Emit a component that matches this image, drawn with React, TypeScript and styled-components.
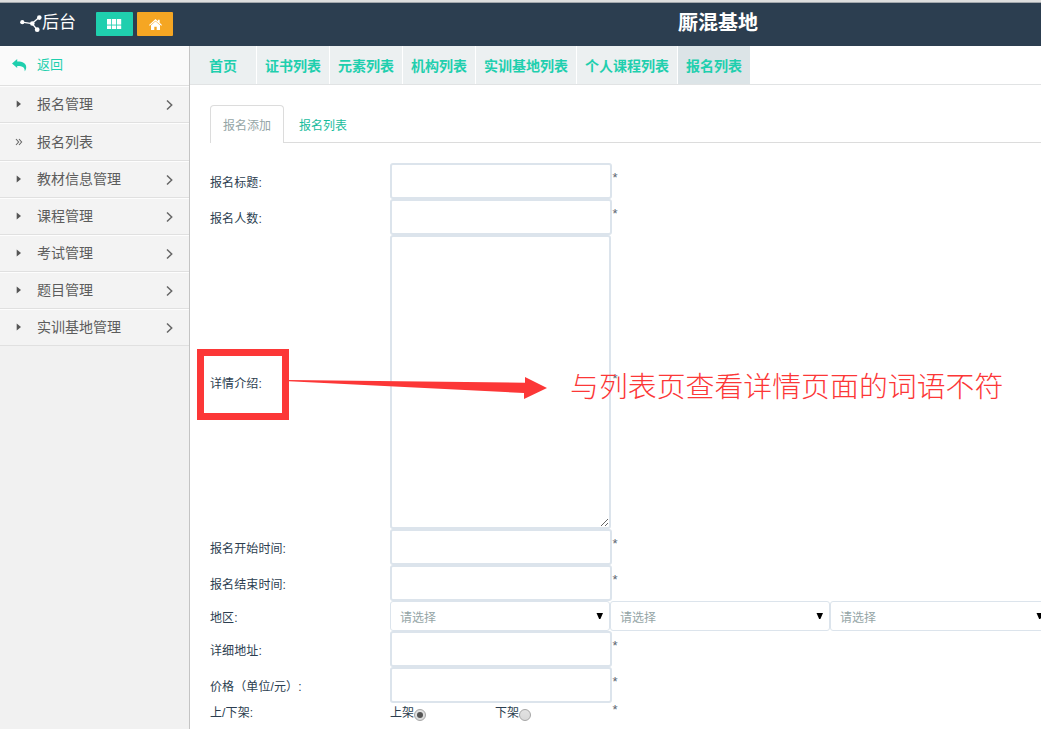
import React from 'react';
import styled, { createGlobalStyle, css } from 'styled-components';

const Global = createGlobalStyle`
  *, *::before, *::after { box-sizing: border-box; }
  html, body { margin: 0; padding: 0; overflow: hidden; background: #fff; }
  body {
    font-family: "Liberation Sans", "Noto Sans CJK SC", sans-serif;
    font-size: 12px;
    color: #2c3e50;
  }
`;

const Page = styled.div`
  position: relative;
  width: 1041px;
  height: 729px;
  overflow: hidden;
  display: flex;
  flex-direction: column;
`;

const Header = styled.header`
  flex: none;
  display: flex;
  align-items: center;
  height: 46px;
  padding: 0 0 2px 20px;
  border-top: 2px solid #dedede;
  background: #2c3e50;
  box-shadow: inset 0 1px 0 #a3a8ad;
`;

const Brand = styled.div`
  display: flex;
  align-items: center;
  width: 76px;
  color: #fff;
  font-size: 17px;
  line-height: 38px;
  white-space: nowrap;
  svg { margin-top: 1px; }
`;

const HeaderButton = styled.button<{ $color: string; $width: number }>`
  display: flex;
  align-items: center;
  justify-content: center;
  width: ${p => p.$width}px;
  height: 24px;
  margin: 2px 4px 0 0;
  padding: 0;
  border: 0;
  border-radius: 1px;
  background: ${p => p.$color};
`;

const SiteTitle = styled.h1`
  margin: 0 0 0 501px;
  color: #fff;
  font-size: 20px;
  line-height: 30px;
  font-weight: 700;
  white-space: nowrap;
`;

const Body = styled.div`
  flex: 1;
  min-height: 0;
  display: flex;
`;

const Sidebar = styled.nav`
  flex: none;
  width: 190px;
  border-right: 1px solid #c4c4c4;
  background: #f1f1f1;
`;

const SideItem = styled.a<{ $h?: number; $top?: boolean }>`
  display: flex;
  align-items: center;
  height: ${p => p.$h ?? 37}px;
  padding: ${p => (p.$h === 38 ? '1px' : '0')} 15px 1px 12px;
  border-bottom: 1px solid #e0e0e0;
  box-shadow: inset 0 1px 0 #fdfdfd;
  background: ${p => (p.$top ? '#fafafa' : '#f3f3f3')};
  color: ${p => (p.$top ? '#1fcfae' : '#5c5c5c')};
  font-size: ${p => (p.$top ? 13 : 14)}px;
  line-height: 20px;
`;

const Lead = styled.span`
  display: flex;
  width: 25px;
`;

const SideText = styled.span`
  flex: 1;
`;

const Main = styled.main`
  flex: 1;
  min-width: 0;
  background: #fff;
`;

const TopTabs = styled.div`
  display: flex;
  height: 39px;
  border-bottom: 1px solid #e1e3e4;
`;

const TopTab = styled.a<{ $w: number; $active?: boolean }>`
  flex: none;
  width: ${p => p.$w}px;
  padding-left: ${p => (p.$w === 67 ? 19 : 8)}px;
  border-right: ${p => (p.$active ? 0 : 1)}px solid #fff;
  background: ${p => (p.$active ? '#dce4e7' : '#ecf0f1')};
  color: #1fcfae;
  font-size: 14px;
  font-weight: 700;
  line-height: 41px;
  height: 38px;
  white-space: nowrap;
`;

const Content = styled.div`
  padding: 20px 0 0 20px;
`;

const InnerTabs = styled.div`
  display: flex;
  height: 38px;
  border-bottom: 1px solid #dcdcdc;
`;

const InnerTab = styled.a<{ $active?: boolean }>`
  height: 38px;
  line-height: 40px;
  font-size: 12px;
  ${p =>
    p.$active
      ? css`
          width: 74px;
          padding-left: 12px;
          border: 1px solid #dcdcdc;
          border-bottom: 0;
          border-radius: 4px 4px 0 0;
          background: #fff;
          color: #95a5a6;
        `
      : css`
          padding: 1px 15px 0;
          color: #18bc9c;
        `}
`;

const Form = styled.form`
  padding-top: 20px;
`;

const Row = styled.div<{ $h: number }>`
  display: grid;
  grid-template-columns: 180px auto;
  justify-content: start;
  height: ${p => p.$h}px;
`;

const Label = styled.label<{ $raised?: boolean }>`
  align-self: center;
  padding: ${p => (p.$raised ? '0 0 1px' : '3px 0 0')};
  line-height: 18px;
  letter-spacing: 0.1px;
  white-space: nowrap;
`;

const Field = styled.div`
  display: flex;
  align-items: center;
`;

const field = css`
  margin: 0;
  border: 2px solid #dce4ec;
  border-radius: 3px;
  background: #fff;
  outline: none;
`;

const TextInput = styled.input`
  ${field}
  width: 222px;
  height: 36px;
`;

const TextArea = styled.textarea`
  ${field}
  display: block;
  width: 221px;
  height: 294px;
  margin-right: 1px;
  resize: both;
`;

const Required = styled.span`
  width: 6px;
  padding: 0 0 6px 0.5px;
  color: #5a6470;
  font-family: "Liberation Sans", sans-serif;
  font-size: 13px;
  line-height: 14px;
`;

const Select = styled.div`
  flex: none;
  display: flex;
  align-items: center;
  justify-content: space-between;
  width: 220px;
  height: 30px;
  padding: 0 6px 0 9px;
  border: 1px solid #dce4ec;
  border-radius: 3px;
  color: #95a5a6;
  line-height: 20px;
  span { padding-top: 3px; }
`;

const RadioGroup = styled.div`
  display: flex;
  width: 222px;
`;

const RadioOption = styled.label`
  display: flex;
  align-items: center;
  width: 105px;
  line-height: 20px;
`;

const Radio = styled.span<{ $on?: boolean }>`
  display: flex;
  align-items: center;
  justify-content: center;
  width: 12px;
  height: 12px;
  margin-top: 3px;
  border: 1px solid #a5a5a5;
  border-radius: 50%;
  background: linear-gradient(#e2e2e2, #d9d9d9);
  &::after {
    content: "";
    width: 6px;
    height: 6px;
    border-radius: 50%;
    background: ${p => (p.$on ? '#555' : 'transparent')};
  }
`;

const Highlight = styled.div`
  position: absolute;
  left: 197px;
  top: 349px;
  width: 92px;
  height: 71px;
  border: 7px solid #fc3737;
`;

const Arrow = styled.svg`
  position: absolute;
  left: 288px;
  top: 370px;
`;

const Note = styled.div`
  position: absolute;
  left: 570px;
  top: 364px;
  color: #fc3737;
  font-family: "Noto Sans CJK SC", sans-serif;
  font-size: 28.9px;
  font-weight: 300;
  line-height: 40px;
  white-space: nowrap;
`;

const ShareIcon = () => (
  <svg width="22" height="18" viewBox="0 0 22 18" fill="#fff" stroke="#fff">
    <path d="M2 7.2 12 8.5 19 2.5M12 8.5l5 6" fill="none" strokeWidth="1.2" />
    <g stroke="none">
      <circle cx="2.3" cy="7.2" r="2.1" />
      <circle cx="12.3" cy="8.5" r="2.3" />
      <circle cx="19.3" cy="2.6" r="2.3" />
      <circle cx="17.2" cy="14.7" r="2.4" />
    </g>
  </svg>
);

const GridIcon = () => (
  <svg width="15" height="10" viewBox="0 0 15 10" fill="#fff">
    {[0, 5, 10].map(x => (
      <g key={x}>
        <rect x={x} y="0" width="4.2" height="5.6" />
        <rect x={x} y="6.5" width="4.2" height="3.5" />
      </g>
    ))}
  </svg>
);

const HomeIcon = () => (
  <svg width="13" height="11" viewBox="0 0 13 11" fill="#fff">
    <path d="M6.5 0 8.9 2.2V.7h1.8v3.1L13 5.9l-.7.8L6.5 1.7.7 6.7 0 5.9z" />
    <path d="M6.5 2.2 11 6.2V11H7.7V7.7H5.3V11H2V6.2z" />
  </svg>
);

const ReplyIcon = () => (
  <svg width="15" height="13" viewBox="0 0 15 13" fill="#1fcfae">
    <path d="M0 4.5 5.2 0v2.6c5.8 0 9 1.9 9 5.6 0 1.7-.6 3-1.5 4 .2-3.2-1.6-5.1-7.5-5.1V9z" />
  </svg>
);

const CaretIcon = () => (
  <svg width="12" height="8" viewBox="0 0 12 8" fill="#555">
    <path d="M4.7 .4 9 4 4.7 7.6z" />
  </svg>
);

const DoubleIcon = () => (
  <svg width="12" height="8" viewBox="0 0 12 8" fill="none" stroke="#666" strokeWidth="1.1">
    <path d="M4 1l2.6 3L4 7M7 1l2.6 3L7 7" />
  </svg>
);

const ChevronIcon = () => (
  <svg width="8" height="12" viewBox="0 0 8 12" fill="none" stroke="#666" strokeWidth="1.5" transform="translate(0 1)">
    <path d="M1 1.5 5.7 6 1 10.5" />
  </svg>
);

const SelectArrow = () => (
  <svg width="7" height="7" viewBox="0 0 7 7">
    <path d="M0.5 0h6.5L4.4 6H3.1z" fill="#000" />
  </svg>
);

const menu: { text: string; h?: number; current?: boolean }[] = [
  { text: '报名管理' },
  { text: '报名列表', h: 38, current: true },
  { text: '教材信息管理' },
  { text: '课程管理' },
  { text: '考试管理' },
  { text: '题目管理' },
  { text: '实训基地管理' },
];

const tabs: [string, number][] = [
  ['首页', 67],
  ['证书列表', 73],
  ['元素列表', 73],
  ['机构列表', 73],
  ['实训基地列表', 101],
  ['个人课程列表', 101],
  ['报名列表', 72],
];

const InputRow = ({ label }: { label: string }) => (
  <Row $h={36}>
    <Label>{label}</Label>
    <Field>
      <TextInput type="text" />
      <Required>*</Required>
    </Field>
  </Row>
);

export default function App() {
  return (
    <Page>
      <Global />
      <Header>
        <Brand>
          <ShareIcon />
          <span>后台</span>
        </Brand>
        <HeaderButton $color="#1fcfae" $width={37}><GridIcon /></HeaderButton>
        <HeaderButton $color="#f5a623" $width={36}><HomeIcon /></HeaderButton>
        <SiteTitle>厮混基地</SiteTitle>
      </Header>
      <Body>
        <Sidebar>
          <SideItem $top $h={40}>
            <Lead><ReplyIcon /></Lead>
            <SideText>返回</SideText>
          </SideItem>
          {menu.map(m => (
            <SideItem key={m.text} $h={m.h}>
              <Lead>{m.current ? <DoubleIcon /> : <CaretIcon />}</Lead>
              <SideText>{m.text}</SideText>
              {!m.current && <ChevronIcon />}
            </SideItem>
          ))}
        </Sidebar>
        <Main>
          <TopTabs>
            {tabs.map(([text, w], i) => (
              <TopTab key={text} $w={w} $active={i === tabs.length - 1}>{text}</TopTab>
            ))}
          </TopTabs>
          <Content>
            <InnerTabs>
              <InnerTab $active>报名添加</InnerTab>
              <InnerTab>报名列表</InnerTab>
            </InnerTabs>
            <Form>
              <InputRow label="报名标题:" />
              <InputRow label="报名人数:" />
              <Row $h={294}>
                <Label>详情介绍:</Label>
                <Field>
                  <TextArea />
                  <Required>*</Required>
                </Field>
              </Row>
              <InputRow label="报名开始时间:" />
              <InputRow label="报名结束时间:" />
              <Row $h={30}>
                <Label>地区:</Label>
                <Field>
                  {[0, 1, 2].map(i => (
                    <Select key={i}>
                      <span>请选择</span>
                      <SelectArrow />
                    </Select>
                  ))}
                </Field>
              </Row>
              <InputRow label="详细地址:" />
              <InputRow label="价格（单位/元）:" />
              <Row $h={20}>
                <Label $raised>上/下架:</Label>
                <Field>
                  <RadioGroup>
                    <RadioOption>上架<Radio $on /></RadioOption>
                    <RadioOption>下架<Radio /></RadioOption>
                  </RadioGroup>
                  <Required>*</Required>
                </Field>
              </Row>
            </Form>
          </Content>
        </Main>
      </Body>
      <Highlight />
      <Arrow width="260" height="32" viewBox="0 0 260 32" fill="#fc3737">
        <path d="M1 10 237 12.8V7L259 18 236 29V23L1 11.2z" />
      </Arrow>
      <Note>与列表页查看详情页面的词语不符</Note>
    </Page>
  );
}
